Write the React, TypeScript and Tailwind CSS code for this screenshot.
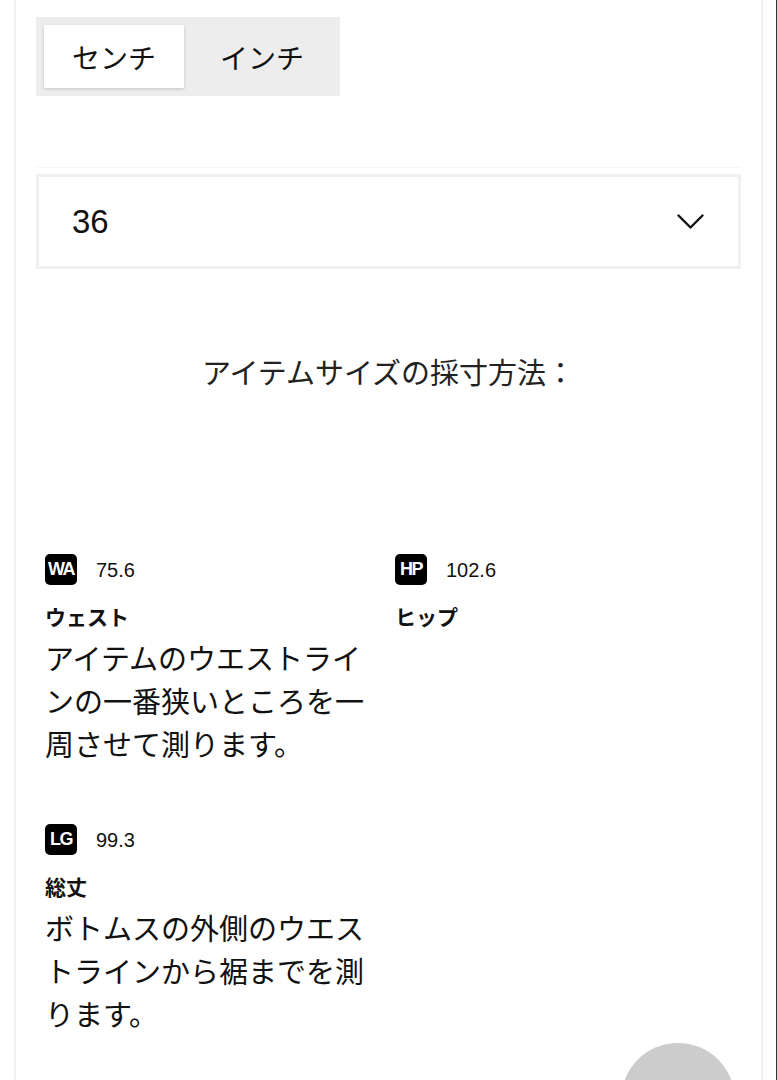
import React from "react";

const jp = { fontFamily: '"Noto Sans CJK JP", "Noto Sans", sans-serif' };
const lat = { fontFamily: '"Liberation Sans", Arial, "Noto Sans CJK JP", sans-serif' };

function Badge({ code }: { code: string }) {
  return (
    <span
      className="flex h-[31px] w-[32px] items-center justify-center rounded-[5px] bg-black text-[18px] font-semibold tracking-[-1.5px] text-white"
      style={lat}
    >
      {code}
    </span>
  );
}

function Item({ code, value, label, desc }: { code: string; value: string; label: string; desc: string }) {
  return (
    <div className="flex flex-col">
      <div className="flex h-[31px] items-center gap-[19px]">
        <Badge code={code} />
        <span className="text-[20px] text-[#111]" style={lat}>
          {value}
        </span>
      </div>
      {label && (
        <div className="mt-[17px] text-[21px] font-bold leading-[28px] text-[#111]" style={jp}>
          {label}
        </div>
      )}
      {desc && (
        <p className="mt-[6px] text-[29px] leading-[43px] text-[#111]" style={jp}>
          {desc}
        </p>
      )}
    </div>
  );
}

export default function App() {
  return (
    <div className="relative h-[1080px] w-[777px] overflow-hidden border-r border-[#333] bg-white">
      <div className="ml-[14px] h-full w-[749px] border-x-2 border-[#f0f0f0] px-[20px] pt-[17px]">
        <div className="inline-flex gap-2 bg-[#ededed] p-2">
          <button
            className="h-[63px] w-[140px] bg-white text-[28px] text-[#111] shadow-[0_1px_3px_rgba(0,0,0,0.18)]"
            style={jp}
          >
            センチ
          </button>
          <button className="h-[63px] w-[140px] text-[28px] text-[#111]" style={jp}>
            インチ
          </button>
        </div>

        <div className="mt-[71px] border-t border-[#f6f6f6]" />

        <div className="mt-[6px] flex h-[95px] items-center justify-between border-[3px] border-[#f0f0f0] pl-[33px] pr-[34px]">
          <span className="text-[33px] text-[#111]" style={lat}>
            36
          </span>
          <svg width="27" height="16" viewBox="0 0 27 16" fill="none">
            <path d="M1.5 1.5 L13.5 13.5 L25.5 1.5" stroke="#111" strokeWidth="2.4" strokeLinecap="round" strokeLinejoin="round" />
          </svg>
        </div>

        <h2 className="mt-[82px] text-center text-[29px] font-normal leading-[40px] text-[#222]" style={jp}>
          アイテムサイズの採寸方法：
        </h2>

        <div className="mt-[163px] grid grid-cols-[330px_1fr] gap-x-[20px] gap-y-[59px] pl-[9px]">
          <Item code="WA" value="75.6" label="ウェスト" desc="アイテムのウエストラインの一番狭いところを一周させて測ります。" />
          <Item code="HP" value="102.6" label="ヒップ" desc="" />
          <Item code="LG" value="99.3" label="総丈" desc="ボトムスの外側のウエストラインから裾までを測ります。" />
        </div>
      </div>

      <div className="absolute left-[621px] top-[1043px] h-[114px] w-[114px] rounded-full bg-[#cccccc]" />
    </div>
  );
}
